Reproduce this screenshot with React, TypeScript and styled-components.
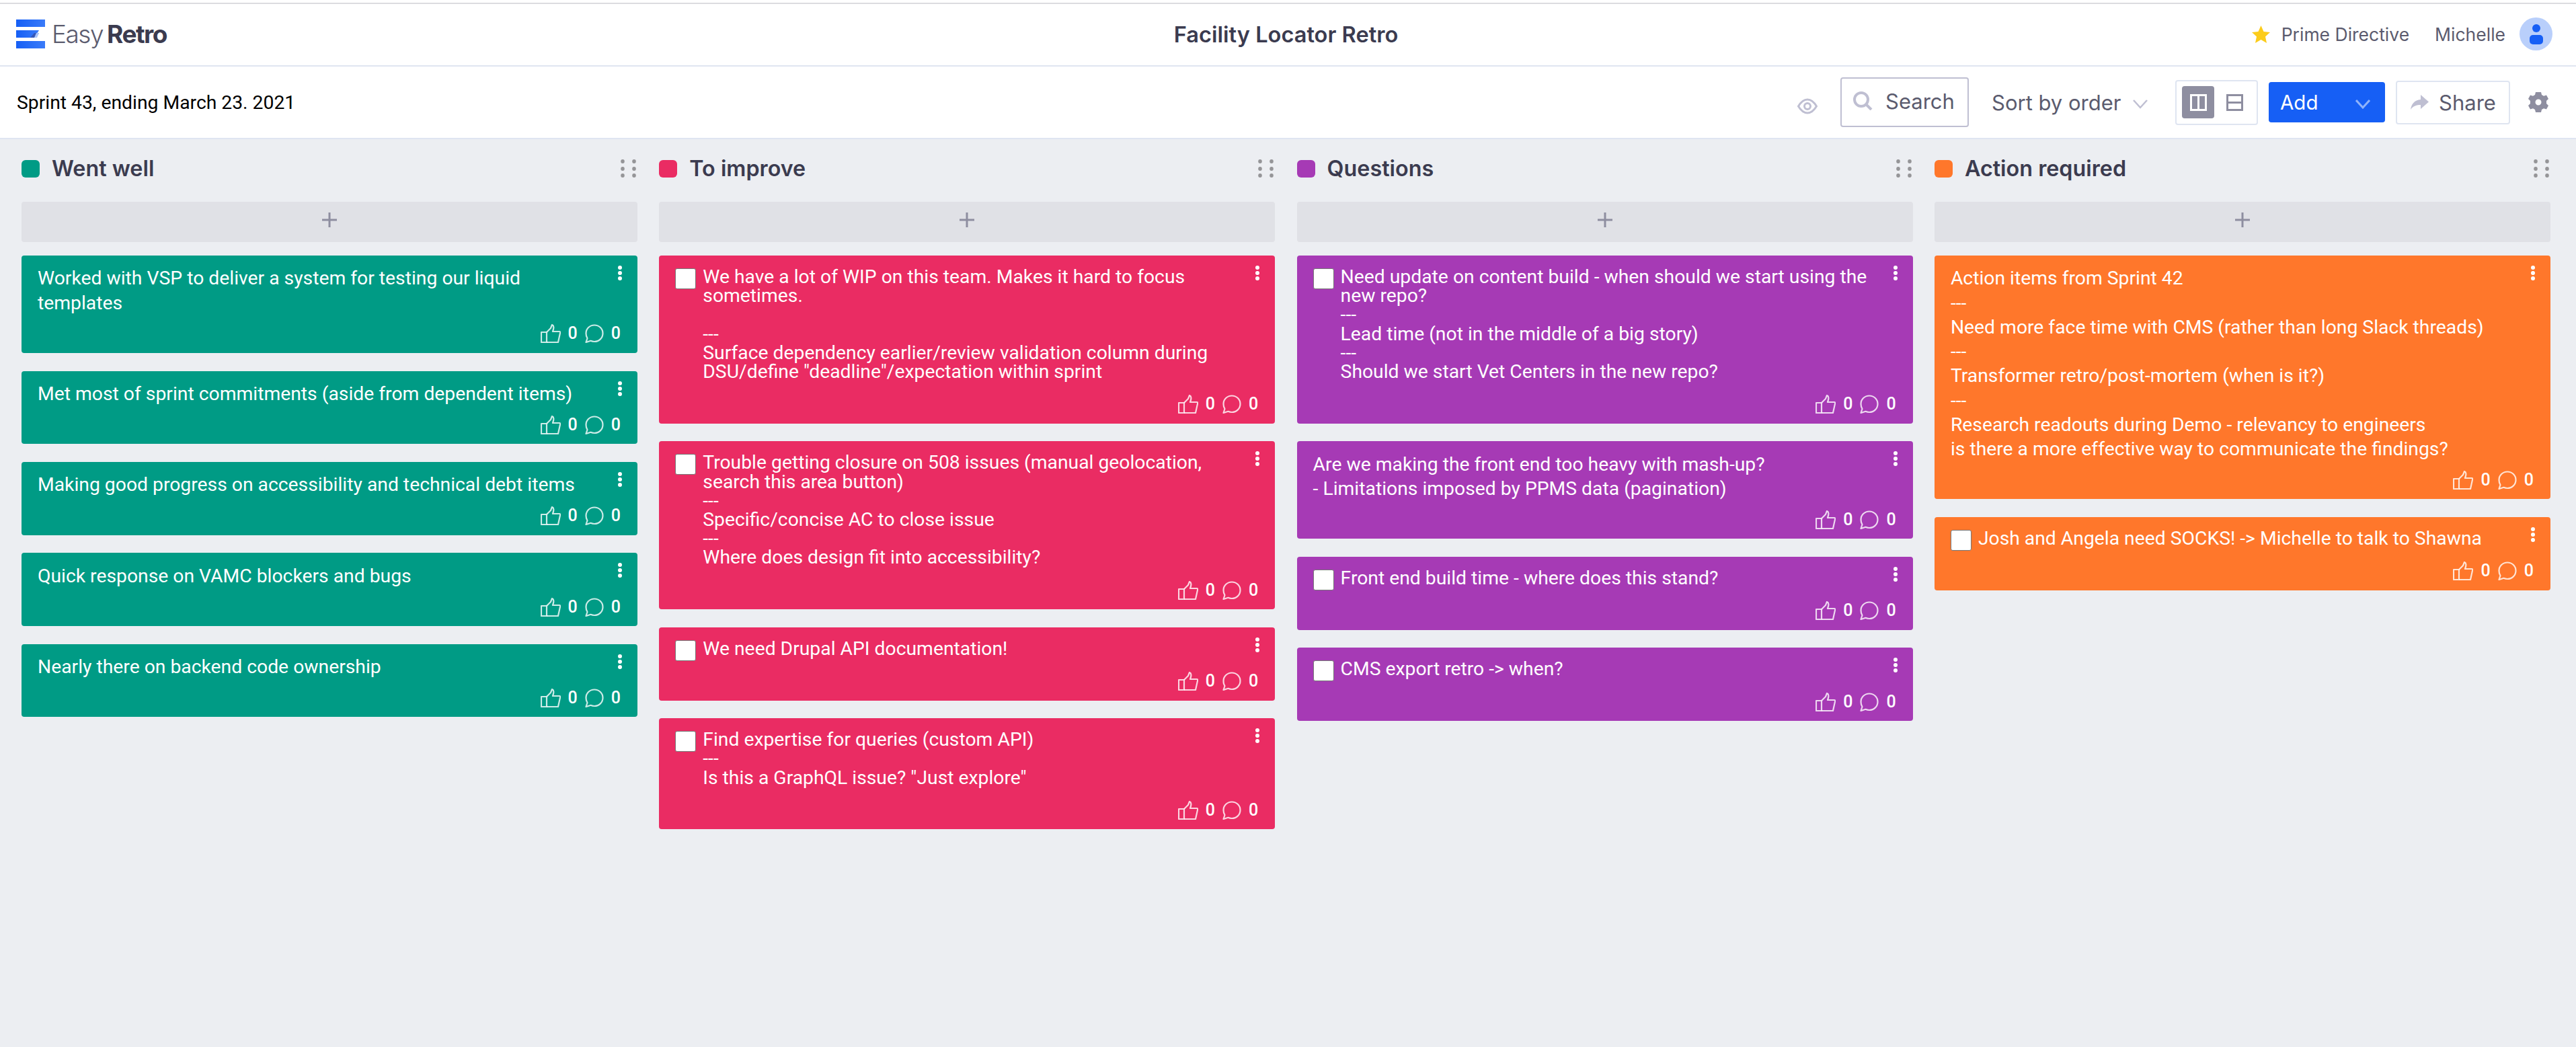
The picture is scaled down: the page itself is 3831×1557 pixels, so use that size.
import React from "react";
import styled, { createGlobalStyle } from "styled-components";

const Global = createGlobalStyle`
  html, body { margin: 0; padding: 0; background: #eceef2; }
  body { font-family: Roboto, "Liberation Sans", sans-serif; }
  * { box-sizing: border-box; }
`;

const HEAD = `Inter, "Noto Sans", sans-serif`;
const INK = "#3b3b4f";
const MUTE = "#5b5b6e";
const LINE = "#dfe5f1";
const ICON = "#bfbfd2";
const SLATE = "#8e8ea0";
const BLUE = "#165ff5";

const Page = styled.div`
  width: 3831px;
  height: 1557px;
  background: #eceef2;
  overflow: hidden;
`;

const TopBar = styled.header`
  height: 99px;
  padding: 0 35px 0 24px;
  background: #fff;
  border-top: 4px solid #fff;
  border-bottom: 2px solid ${LINE};
  box-shadow: inset 0 2px 0 #dcdce0;
  display: grid;
  grid-template-columns: 1fr auto 1fr;
  align-items: center;
`;

const Brand = styled.div`
  display: flex;
  align-items: center;
  gap: 10px;
`;

const BrandWord = styled.div`
  font-family: ${HEAD};
  font-size: 37px;
  letter-spacing: -1.5px;
  color: ${MUTE};
  font-weight: 300;
  line-height: 43px;
  display: flex;
  gap: 6px;
`;

const BrandStrong = styled.span`
  font-weight: 700;
  color: ${INK};
`;

const BoardTitle = styled.h1`
  margin: 0;
  padding: 1px 0 0 5px;
  font-family: ${HEAD};
  font-weight: 600;
  font-size: 32.600px;
  color: ${INK};
`;

const UserArea = styled.div`
  display: flex;
  align-items: center;
  justify-content: flex-end;
  font-family: ${HEAD};
  font-size: 26.500px;
  color: ${MUTE};
`;

const Directive = styled.span`
  display: flex;
  align-items: center;
  gap: 17px;
  margin-right: 38px;
`;

const Avatar = styled.span`
  width: 49px;
  height: 49px;
  margin-left: 21px;
  border-radius: 50%;
  background: #b9cffb;
  display: flex;
  align-items: center;
  justify-content: center;
`;

const Toolbar = styled.div`
  height: 108px;
  padding: 0 41px 0 25px;
  background: #fff;
  border-bottom: 2px solid ${LINE};
  display: flex;
  align-items: center;
`;

const SprintNote = styled.div`
  font-size: 28.3px;
  color: #000;
  margin-right: auto;
`;

const Eye = styled.span`
  display: flex;
  margin: 12px 34px 0 0;
`;

const SearchBox = styled.div`
  width: 191px;
  height: 74px;
  border: 2px solid ${ICON};
  border-radius: 4px;
  padding: 0 16px 4px;
  display: flex;
  align-items: center;
  gap: 19px;
  font-family: ${HEAD};
  font-size: 31px;
  color: ${MUTE};
`;

const Sort = styled.div`
  margin-left: 34px;
  width: 239px;
  display: flex;
  align-items: center;
  gap: 18px;
  font-family: ${HEAD};
  font-size: 31px;
  color: ${MUTE};
  white-space: nowrap;
`;

const ChevronSlot = styled.span`
  display: flex;
  margin-top: 5px;
`;

const ViewToggle = styled.div`
  margin-left: 34px;
  width: 123px;
  height: 67px;
  border: 2px solid ${LINE};
  border-radius: 4px;
  padding: 7px 8px;
  display: flex;
  align-items: center;
  gap: 18px;
`;

const ViewActive = styled.span`
  width: 48px;
  height: 48px;
  border-radius: 4px;
  background: ${SLATE};
  display: flex;
  align-items: center;
  justify-content: center;
`;

const AddButton = styled.div`
  margin-left: 16px;
  width: 173px;
  height: 60px;
  background: ${BLUE};
  border-radius: 4px;
  padding: 0 22px 0 17px;
  display: flex;
  align-items: center;
  justify-content: space-between;
  font-family: ${HEAD};
  font-size: 29.500px;
  color: #fff;
`;

const ShareButton = styled.div`
  margin-left: 16px;
  width: 170px;
  height: 65px;
  border: 2px solid ${LINE};
  border-radius: 4px;
  padding: 0 17px 0 20px;
  display: flex;
  align-items: center;
  gap: 15px;
  font-family: ${HEAD};
  font-size: 31px;
  color: ${MUTE};
`;

const Gear = styled.span`
  display: flex;
  margin-left: 27px;
`;

const Board = styled.main`
  padding: 30px 36px 0 32px;
  display: grid;
  grid-template-columns: repeat(4, 916px);
  column-gap: 32.3px;
  align-items: start;
`;

const Column = styled.section`
  display: flex;
  flex-direction: column;
  gap: 26.7px;
`;

const ColumnHead = styled.div`
  height: 27px;
  margin-bottom: 9.3px;
  display: flex;
  align-items: center;
  gap: 18px;
  font-family: ${HEAD};
  font-weight: 600;
  font-size: 32.300px;
  color: ${INK};
`;

const Swatch = styled.span<{ $c: string }>`
  width: 27px;
  height: 26px;
  border-radius: 6px;
  background: ${(p) => p.$c};
`;

const Grip = styled.span`
  margin-left: auto;
  margin-right: 2px;
  display: flex;
`;

const AddBar = styled.div`
  height: 60px;
  margin-bottom: -6.7px;
  border-radius: 4px;
  background: #e0e1e6;
  display: flex;
  align-items: center;
  justify-content: center;
  padding-bottom: 6px;
`;

const Card = styled.article<{ $c: string; $check: boolean }>`
  position: relative;
  background: ${(p) => p.$c};
  border-radius: 4px;
  padding: ${(p) => (p.$check ? "18px" : "16.500px")} 25px 14.500px 24px;
  color: #fff;
  font-size: 28.3px;
  line-height: ${(p) => (p.$check ? "28.2px" : "36.2px")};
`;

const CardBody = styled.div`
  display: flex;
  gap: 10px;
  padding-right: 26px;
`;

const Check = styled.span`
  flex: none;
  width: 31px;
  height: 31px;
  margin: 1px 0 -4px;
  background: #fff;
  border: 1px solid #767676;
  border-radius: 3px;
`;

const CardText = styled.div`
  white-space: pre-line;
`;

const Kebab = styled.span`
  position: absolute;
  top: 14px;
  right: 23px;
  display: flex;
`;

const CardFoot = styled.div<{ $check: boolean }>`
  margin-top: ${(p) => (p.$check ? "20px" : "13.500px")};
  height: 28px;
  display: flex;
  align-items: center;
  justify-content: flex-end;
  font-weight: 500;
  font-size: 25px;
  line-height: 28px;
  gap: 11px;
`;

const Logo = () => (
  <svg width="43" height="43" viewBox="0 0 43 43">
    <defs>
      <linearGradient id="lg" x1="0" x2="1" y1="0" y2="0">
        <stop offset="0" stopColor="#165ff5" />
        <stop offset="1" stopColor="#3a7bf9" />
      </linearGradient>
    </defs>
    <rect width="43" height="11" fill="url(#lg)" />
    <path d="M0 16h34l-7 11H0z" fill="url(#lg)" />
    <path d="M21 27l6-7h7l-4 7z" fill="#3557b8" />
    <path d="M27 27l3-7h4l-3 7z" fill="#a9c4fb" />
    <rect y="32" width="43" height="11" fill="url(#lg)" />
  </svg>
);

const Star = () => (
  <svg width="27" height="26" viewBox="0 0 27 26">
    <path d="M13.500 0l4 9 9.500 1-7 6.500 2 9.500-8.500-5-8.500 5 2-9.500L0 10l9.500-1z" fill="#fccc1b" />
  </svg>
);

const Person = () => (
  <svg width="20" height="30" viewBox="0 0 20 30">
    <circle cx="10" cy="6" r="6" fill={BLUE} />
    <rect y="16" width="20" height="14" rx="5" fill={BLUE} />
  </svg>
);

const EyeIcon = () => (
  <svg width="30" height="24" viewBox="0 0 30 24" fill="none" stroke={ICON} strokeWidth="3">
    <path d="M1.500 12C6 4.500 10 2 15 2s9 2.500 13.500 10C24 19.500 20 22 15 22S6 19.500 1.500 12z" />
    <circle cx="15" cy="12" r="4.500" />
  </svg>
);

const SearchIcon = () => (
  <svg width="30" height="28" viewBox="0 0 30 28" fill="none" stroke={ICON} strokeWidth="4">
    <circle cx="13" cy="12" r="10" />
    <path d="M21 20l7 7" />
  </svg>
);

const Chevron = ({ c, s = 2.5 }: { c: string; s?: number }) => (
  <ChevronSlot>
    <svg width="22" height="14" viewBox="0 0 22 14" fill="none" stroke={c} strokeWidth={s}>
      <path d="M1 1l10 11L21 1" />
    </svg>
  </ChevronSlot>
);

const ColumnsIcon = () => (
  <svg width="25" height="25" viewBox="0 0 25 25" fill="none" stroke="#fff" strokeWidth="3">
    <rect x="1.500" y="1.500" width="22" height="22" />
    <path d="M12.500 1v23" />
  </svg>
);

const RowsIcon = () => (
  <svg width="25" height="25" viewBox="0 0 25 25" fill="none" stroke={SLATE} strokeWidth="3">
    <rect x="1.500" y="1.500" width="22" height="22" />
    <path d="M1 12.500h23" />
  </svg>
);

const ShareIcon = () => (
  <svg width="27" height="22" viewBox="0 0 27 22">
    <path d="M15 0l12 10.500L15 21v-6C9 15 4 16.500 0 22c1-8 6-14.500 15-15z" fill={ICON} />
  </svg>
);

const GearIcon = () => (
  <svg width="30" height="30" viewBox="0 0 30 30">
    <path
      fillRule="evenodd"
      d="M11 0h8l1 4 3 1.700 4-1.200 3 5.500-3 3v4l3 3-3 5.500-4-1.200-3 1.700-1 4h-8l-1-4-3-1.700-4 1.200-3-5.500 3-3v-4l-3-3 3-5.500 4 1.200 3-1.700zM15 10.500a4.500 4.500 0 100 9 4.500 4.500 0 000-9z"
      fill={SLATE}
    />
  </svg>
);

const PlusIcon = () => (
  <svg width="22" height="22" viewBox="0 0 22 22" fill="none" stroke={SLATE} strokeWidth="3">
    <path d="M11 0v22M0 11h22" />
  </svg>
);

const GripIcon = () => (
  <svg width="23" height="27" viewBox="0 0 23 27" fill="#959598">
    {[0, 17].map((x) =>
      [0, 11, 21].map((y) => <ellipse key={`${x}-${y}`} cx={x + 3} cy={y + 3} rx="2.800" ry="3" />)
    )}
  </svg>
);

const KebabIcon = () => (
  <svg width="6" height="24" viewBox="0 0 6 24" fill="#fff">
    <circle cx="3" cy="4" r="3" />
    <circle cx="3" cy="12" r="3" />
    <circle cx="3" cy="20" r="3" />
  </svg>
);

const ThumbIcon = () => (
  <svg width="30" height="28" viewBox="0 0 30 28" fill="none" stroke="#fff" strokeOpacity=".8" strokeWidth="2.200" strokeLinejoin="round">
    <path d="M1 12h8v15H1z" />
    <path d="M9 12l6-6 2-5c3 1 3 5 1 10h10c1 0 1.500 1 1 2.500L26 27H9" />
  </svg>
);

const BubbleIcon = () => (
  <svg width="28" height="28" viewBox="0 0 28 28" fill="none" stroke="#fff" strokeOpacity=".8" strokeWidth="2.200" strokeLinejoin="round">
    <path d="M14 1.500c7 0 12.500 5.500 12.500 12.200S21 26 14 26c-2 0-4-.5-5.500-1.200L1.500 27l2-6C2 18.800 1.500 16.500 1.500 13.700 1.500 7 7 1.500 14 1.500z" />
  </svg>
);

type CardData = { text: string; check?: boolean };
type ColumnData = { title: string; color: string; cards: CardData[] };

const columns: ColumnData[] = [
  {
    title: "Went well",
    color: "#009b85",
    cards: [
      { text: "Worked with VSP to deliver a system for testing our liquid templates" },
      { text: "Met most of sprint commitments (aside from dependent items)" },
      { text: "Making good progress on accessibility and technical debt items" },
      { text: "Quick response on VAMC blockers and bugs" },
      { text: "Nearly there on backend code ownership" },
    ],
  },
  {
    title: "To improve",
    color: "#ea2c63",
    cards: [
      {
        check: true,
        text: 'We have a lot of WIP on this team. Makes it hard to focus sometimes.\n\n---\nSurface dependency earlier/review validation column during DSU/define "deadline"/expectation within sprint',
      },
      {
        check: true,
        text: "Trouble getting closure on 508 issues (manual geolocation, search this area button)\n---\nSpecific/concise AC to close issue\n---\nWhere does design fit into accessibility?",
      },
      { check: true, text: "We need Drupal API documentation!" },
      {
        check: true,
        text: 'Find expertise for queries (custom API)\n---\nIs this a GraphQL issue? "Just explore"',
      },
    ],
  },
  {
    title: "Questions",
    color: "#a63ab5",
    cards: [
      {
        check: true,
        text: "Need update on content build - when should we start using the new repo?\n---\nLead time (not in the middle of a big story)\n---\nShould we start Vet Centers in the new repo?",
      },
      {
        text: "Are we making the front end too heavy with mash-up?\n- Limitations imposed by PPMS data (pagination)",
      },
      { check: true, text: "Front end build time - where does this stand?" },
      { check: true, text: "CMS export retro -> when?" },
    ],
  },
  {
    title: "Action required",
    color: "#ff772b",
    cards: [
      {
        text: "Action items from Sprint 42\n---\nNeed more face time with CMS (rather than long Slack threads)\n---\nTransformer retro/post-mortem (when is it?)\n---\nResearch readouts during Demo - relevancy to engineers\nis there a more effective way to communicate the findings?",
      },
      { check: true, text: "Josh and Angela need SOCKS! -> Michelle to talk to Shawna" },
    ],
  },
];

export default function App() {
  return (
    <Page>
      <Global />
      <TopBar>
        <Brand>
          <Logo />
          <BrandWord>
            <span>Easy</span>
            <BrandStrong>Retro</BrandStrong>
          </BrandWord>
        </Brand>
        <BoardTitle>Facility Locator Retro</BoardTitle>
        <UserArea>
          <Directive>
            <Star />
            Prime Directive
          </Directive>
          Michelle
          <Avatar>
            <Person />
          </Avatar>
        </UserArea>
      </TopBar>
      <Toolbar>
        <SprintNote>Sprint 43, ending March 23. 2021</SprintNote>
        <Eye>
          <EyeIcon />
        </Eye>
        <SearchBox>
          <SearchIcon />
          Search
        </SearchBox>
        <Sort>
          Sort by order
          <Chevron c={ICON} />
        </Sort>
        <ViewToggle>
          <ViewActive>
            <ColumnsIcon />
          </ViewActive>
          <RowsIcon />
        </ViewToggle>
        <AddButton>
          Add
          <Chevron c="#8fb3fa" s={3} />
        </AddButton>
        <ShareButton>
          <ShareIcon />
          Share
        </ShareButton>
        <Gear>
          <GearIcon />
        </Gear>
      </Toolbar>
      <Board>
        {columns.map((col) => (
          <Column key={col.title}>
            <ColumnHead>
              <Swatch $c={col.color} />
              {col.title}
              <Grip>
                <GripIcon />
              </Grip>
            </ColumnHead>
            <AddBar>
              <PlusIcon />
            </AddBar>
            {col.cards.map((card, i) => (
              <Card key={i} $c={col.color} $check={!!card.check}>
                <Kebab>
                  <KebabIcon />
                </Kebab>
                <CardBody>
                  {card.check && <Check />}
                  <CardText>{card.text}</CardText>
                </CardBody>
                <CardFoot $check={!!card.check}>
                  <ThumbIcon />
                  <span>0</span>
                  <BubbleIcon />
                  <span>0</span>
                </CardFoot>
              </Card>
            ))}
          </Column>
        ))}
      </Board>
    </Page>
  );
}
